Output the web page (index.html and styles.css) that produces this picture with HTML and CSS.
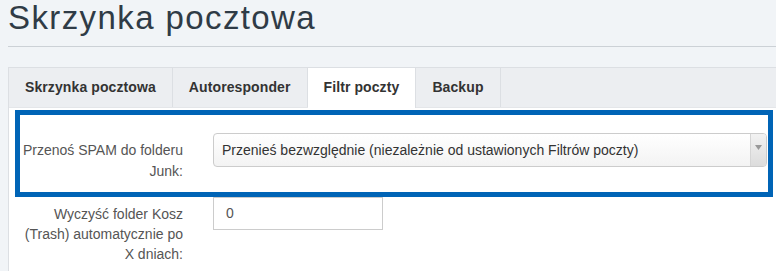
FILE: index.html
```html
<!DOCTYPE html>
<html lang="pl">
<head>
<meta charset="utf-8">
<title>Skrzynka pocztowa</title>
<link rel="stylesheet" href="styles.css">
</head>
<body>
<h1 class="page-title">Skrzynka pocztowa</h1>
<hr class="title-rule">
<div class="panel">
  <ul class="tabs">
    <li class="tab">Skrzynka pocztowa</li>
    <li class="tab">Autoresponder</li>
    <li class="tab active">Filtr poczty</li>
    <li class="tab">Backup</li>
  </ul>
  <div class="panel-body">
    <div class="highlight">
      <div class="form-row">
        <label class="form-label">Przenoś SPAM do folderu Junk:</label>
        <div class="select">
          <span class="select-text">Przenieś bezwzględnie (niezależnie od ustawionych Filtrów poczty)</span>
          <span class="select-arrow"><svg width="7" height="5" viewBox="0 0 7 5"><path d="M0 0h7L3.5 5z" fill="#999"/></svg></span>
        </div>
      </div>
    </div>
    <div class="form-row plain">
      <label class="form-label">Wyczyść folder Kosz (Trash) automatycznie po X dniach:</label>
      <div class="input">0</div>
    </div>
  </div>
</div>
</body>
</html>
```
FILE: styles.css
```css
html, body {
  margin: 0;
  padding: 0;
}
body {
  background: #f1f4f7;
  font-family: "Liberation Sans", Arial, sans-serif;
  font-size: 14px;
  color: #333;
  padding-left: 8px;
  overflow: hidden;
}
.page-title {
  margin: 0;
  padding-top: 0;
  font-size: 33px;
  letter-spacing: 1.4px;
  font-weight: normal;
  line-height: 36px;
  color: #2f3b46;
  height: 46px;
}
.title-rule {
  margin: 0;
  border: 0;
  border-top: 1px solid #ccd1d6;
  height: 0;
}
.panel {
  margin-top: 20px;
  background: #fff;
  border: 1px solid #dcdfe3;
  border-right: 0;
  min-height: 300px;
}
.tabs {
  list-style: none;
  margin: 0;
  padding: 0;
  display: flex;
  background: #eceef1;
  height: 39px;
  border-bottom: 1px solid #e4e6e9;
}
.tab {
  padding: 0 16px 0 16px;
  line-height: 39px;
  font-weight: bold;
  letter-spacing: 0.1px;
  color: #333;
  border-right: 1px solid #dcdfe3;
  white-space: nowrap;
}
.tab.active {
  background: #fff;
  height: 40px;
}
.panel-body {
  padding: 2px 3px 0 6px;
}
.highlight {
  border: 5px solid #0064b6;
  padding: 18px 0 10px 0;
}
.form-row {
  display: grid;
  grid-template-columns: 163px 1fr;
  column-gap: 30px;
  align-items: start;
}
.form-row.plain {
  padding-top: 0;
  grid-template-columns: 168px 170px;
}
.form-row.plain .form-label {
  line-height: 20px;
}
.form-label {
  text-align: right;
  padding-top: 7px;
  line-height: 21px;
  color: #555;
}
.select {
  display: flex;
  height: 32px;
  border: 1px solid #ccc;
  border-radius: 4px;
  background: linear-gradient(#ffffff, #f3f3f3);
  margin-right: 1px;
  overflow: hidden;
}
.select-text {
  flex: 1;
  padding-left: 8px;
  line-height: 32px;
  color: #333;
  white-space: nowrap;
}
.select-arrow {
  width: 16px;
  border-left: 1px solid #d5d5d5;
  background: linear-gradient(#f2f2f2, #dcdcdc);
  display: flex;
  align-items: flex-start;
  justify-content: center;
  padding-top: 11px;
  box-sizing: border-box;
}
.input {
  height: 31px;
  border: 1px solid #ccc;
  padding: 0 12px;
  line-height: 31px;
  color: #555;
  background: #fff;
}
```
